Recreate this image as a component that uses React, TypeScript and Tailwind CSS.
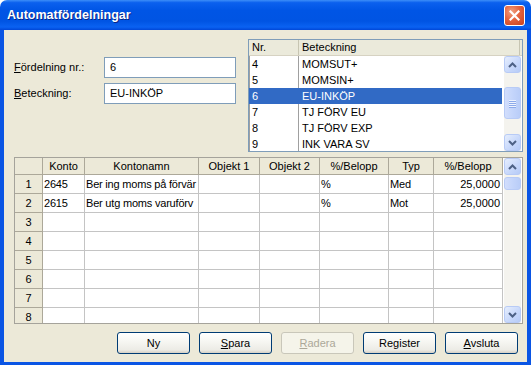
import React from "react";

const listRows = [
  ["4", "MOMSUT+"],
  ["5", "MOMSIN+"],
  ["6", "EU-INKÖP"],
  ["7", "TJ FÖRV EU"],
  ["8", "TJ FÖRV EXP"],
  ["9", "INK VARA SV"],
];

const cols = [
  { label: "Konto", w: "w-[42px]" },
  { label: "Kontonamn", w: "w-[114px]" },
  { label: "Objekt 1", w: "w-[61px]" },
  { label: "Objekt 2", w: "w-[60px]" },
  { label: "%/Belopp", w: "w-[69px]" },
  { label: "Typ", w: "w-[45px]" },
  { label: "%/Belopp", w: "w-[69px]" },
];

const gridRows = [
  ["2645", "Ber ing moms på förvär", "", "", "%", "Med", "25,0000"],
  ["2615", "Ber utg moms varuförv", "", "", "%", "Mot", "25,0000"],
  ["", "", "", "", "", "", ""],
  ["", "", "", "", "", "", ""],
  ["", "", "", "", "", "", ""],
  ["", "", "", "", "", "", ""],
  ["", "", "", "", "", "", ""],
  ["", "", "", "", "", "", ""],
];

function ScrollBtn({ dir }: { dir: "up" | "down" }) {
  return (
    <div className="h-[17px] w-[17px] shrink-0 flex items-center justify-center rounded-[3px] border border-[#b8cbf6] bg-[linear-gradient(135deg,#e6eefd_0%,#c9d9fb_55%,#b6cbf7_100%)]">
      <svg width="9" height="6" viewBox="0 0 9 6">
        <path
          d={dir === "up" ? "M1 5 L4.5 1.5 L8 5" : "M1 1 L4.5 4.5 L8 1"}
          fill="none"
          stroke="#4d6185"
          strokeWidth="2"
        />
      </svg>
    </div>
  );
}

function ScrollBar({ gap, thumb, grip }: { gap: string; thumb: string; grip?: boolean }) {
  return (
    <div className="w-[17px] h-full shrink-0 flex flex-col bg-[#f4f3ee]">
      <ScrollBtn dir="up" />
      <div className={gap} />
      <div
        className={`${thumb} w-[17px] shrink-0 rounded-[3px] border border-[#b8cbf6] bg-[linear-gradient(90deg,#d2defc_0%,#c4d5fb_50%,#b9cdf8_100%)] flex flex-col items-center justify-center gap-[1px]`}
      >
        {grip &&
          [0, 1, 2, 3].map((i) => (
            <div key={i} className="w-[7px] h-[1px] bg-[#eef3fe] shadow-[0_1px_0_#8daaea]" />
          ))}
      </div>
      <div className="flex-1" />
      <ScrollBtn dir="down" />
    </div>
  );
}

function XpButton({ children, disabled }: { children: React.ReactNode; disabled?: boolean }) {
  return (
    <div
      className={
        disabled
          ? "w-[73px] h-[22px] flex items-center justify-center rounded-[3px] border border-[#c9c7ba] bg-[#f5f4ea] text-[#aca899]"
          : "w-[73px] h-[22px] flex items-center justify-center rounded-[3px] border border-[#003c74] bg-[linear-gradient(180deg,#ffffff_0%,#f7f7f3_40%,#ecebe5_85%,#d6d0c5_100%)] text-black"
      }
    >
      {children}
    </div>
  );
}

export default function App() {
  return (
    <div className="w-[531px] h-[365px] flex flex-col bg-white text-[11px] leading-none text-black font-['Liberation_Sans',Arial,sans-serif]">
      {/* title bar */}
      <div className="h-[30px] shrink-0 rounded-t-[7px] flex items-center justify-between pl-[7px] pr-[6px] bg-[linear-gradient(180deg,#3d8ef8_0%,#0b60ee_9%,#0055e5_35%,#0054e3_70%,#0a62f2_90%,#0047d8_100%)]">
        <span className="text-white font-bold text-[12.5px] [text-shadow:1px_1px_0_#0a2585]">Automatfördelningar</span>
        <div className="w-[21px] h-[21px] rounded-[3px] border border-white flex items-center justify-center bg-[radial-gradient(circle_at_35%_30%,#f0a080_0%,#e4633f_45%,#c9401c_100%)]">
          <svg width="11" height="11" viewBox="0 0 11 11">
            <path d="M1.5 1.5 L9.5 9.5 M9.5 1.5 L1.5 9.5" stroke="white" strokeWidth="2.2" strokeLinecap="square" />
          </svg>
        </div>
      </div>

      {/* client */}
      <div className="flex-1 flex flex-col bg-[#ece9d8] border-x-4 border-b-[3px] border-[#0a55e4] pt-[9px] pl-[10px] pr-[4px]">
        <div className="flex h-[113px]">
          <div className="w-[222px] pt-[18px] flex flex-col gap-[5px]">
            <div className="flex items-center h-[21px]">
              <span className="w-[90px]">
                <u>F</u>ördelning nr.:
              </span>
              <div className="w-[132px] h-[21px] border border-[#7f9db9] bg-white flex items-center px-[5px]">6</div>
            </div>
            <div className="flex items-center h-[21px]">
              <span className="w-[90px]">
                <u>B</u>eteckning:
              </span>
              <div className="w-[132px] h-[21px] border border-[#7f9db9] bg-white flex items-center px-[5px]">EU-INKÖP</div>
            </div>
          </div>

          {/* list view */}
          <div className="ml-[12px] w-[275px] h-[113px] border border-[#7f9db9] bg-white flex flex-col">
            <div className="h-[16px] shrink-0 flex bg-[#ebeadb] border-b border-[#d6d2c2]">
              <div className="w-[50px] border-r border-[#c7c5b2] flex items-center pl-[3px]">Nr.</div>
              <div className="flex-1 flex items-center pl-[3px] mr-[2px] border-r border-[#c7c5b2]">Beteckning</div>
            </div>
            <div className="flex-1 flex overflow-hidden">
              <div className="flex-1 flex flex-col overflow-hidden pr-[2px]">
                {listRows.map(([nr, name]) => {
                  const sel = nr === "6";
                  return (
                    <div
                      key={nr}
                      className={
                        sel
                          ? "h-[16px] shrink-0 flex bg-[#316ac5] text-white"
                          : "h-[16px] shrink-0 flex"
                      }
                    >
                      <div className={sel ? "w-[50px] flex items-center pl-[3px]" : "w-[50px] flex items-center pl-[2px] border-l border-r border-[#a0a0a0]"}>
                        {nr}
                      </div>
                      <div className="flex-1 flex items-center pl-[3px]">{name}</div>
                    </div>
                  );
                })}
              </div>
              <div className="pr-[1px] h-full">
                <ScrollBar gap="h-[14px]" thumb="h-[32px]" grip />
              </div>
            </div>
          </div>
        </div>

        {/* grid */}
        <div className="mt-[5px] w-[509px] h-[167px] border border-[#a5a39b] bg-white flex justify-between">
          <div className="flex flex-col overflow-hidden">
            <div className="h-[17px] shrink-0 flex bg-[#ece9d8]">
              <div className="w-[28px] border-r border-b border-[#aca899]" />
              {cols.map((c, i) => (
                <div key={i} className={`${c.w} flex items-center justify-center border-r border-b border-[#aca899]`}>
                  {c.label}
                </div>
              ))}
            </div>
            {gridRows.map((r, ri) => (
              <div key={ri} className="h-[19px] shrink-0 flex">
                <div className="w-[28px] flex items-center justify-center bg-[#ece9d8] border-r border-b border-[#aca899]">
                  {ri + 1}
                </div>
                {cols.map((c, ci) => (
                  <div
                    key={ci}
                    className={
                      ci === 6
                        ? `${c.w} flex items-center justify-end pr-[2px] border-r border-b border-[#c4c4c4] whitespace-nowrap overflow-hidden`
                        : `${c.w} flex items-center pl-[1px] tracking-[-0.2px] border-r border-b border-[#c4c4c4] whitespace-nowrap overflow-hidden`
                    }
                  >
                    {r[ci]}
                  </div>
                ))}
              </div>
            ))}
          </div>
          <div className="pr-[1px] h-full">
            <ScrollBar gap="h-[2px]" thumb="h-[13px]" />
          </div>
        </div>

        {/* buttons */}
        <div className="mt-[8px] flex justify-end gap-[9px] pr-[5px]">
          <XpButton>Ny</XpButton>
          <XpButton>
            <span>
              <u>S</u>para
            </span>
          </XpButton>
          <XpButton disabled>
            <span>
              <u>R</u>adera
            </span>
          </XpButton>
          <XpButton>Register</XpButton>
          <XpButton>
            <span>
              <u>A</u>vsluta
            </span>
          </XpButton>
        </div>
      </div>
    </div>
  );
}
